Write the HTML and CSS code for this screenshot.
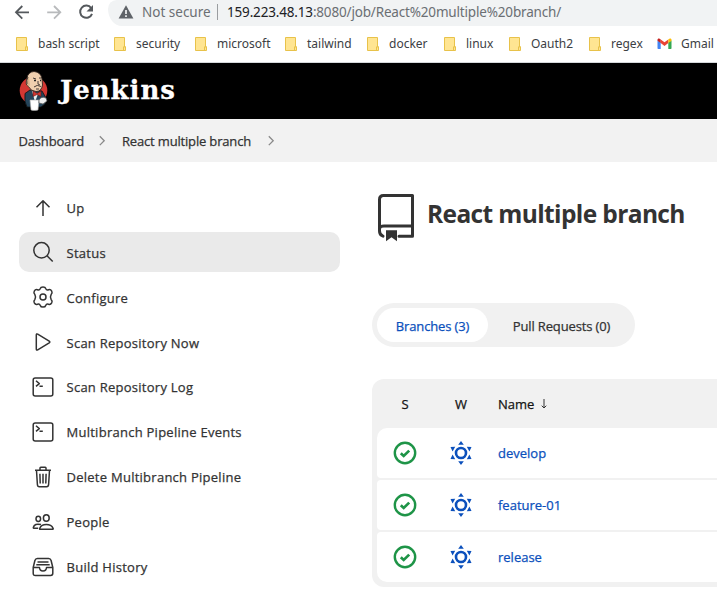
FILE: index.html
```html
<!DOCTYPE html>
<html lang="en">
<head>
<meta charset="utf-8">
<title>React multiple branch [Jenkins]</title>
<link rel="stylesheet" href="styles.css">
</head>
<body>
<svg class="defs" aria-hidden="true">
  <symbol id="folder" viewBox="0 0 14 16"><path d="M1.500 1.500h10v9.300h1v3.700h-11z" fill="#ffe592" stroke="#e8c24a"/><path d="M10.500 14v-3.200h2" fill="none" stroke="#e8c24a"/></symbol>
  <symbol id="chevron" viewBox="0 0 8 12"><path d="M1.800 1.300l4.400 4.400-4.400 4.400" fill="none" stroke="#8a8a8a" stroke-width="1.300"/></symbol>
  <symbol id="terminal" viewBox="0 0 24 24"><rect x="2.200" y="3" width="19.600" height="18" rx="2"/><path d="M5 5.800l3.300 2.800L5 11.400M8.500 11.200h3.300"/></symbol>
  <symbol id="ok" viewBox="0 0 24 24"><circle cx="12" cy="12" r="10.200" fill="none" stroke="#1e9447" stroke-width="2.400"/><path d="M7.800 12.300l2.900 2.700 5.500-5.400" fill="none" stroke="#1e9447" stroke-width="2.700"/></symbol>
  <symbol id="sun" viewBox="0 0 24 24"><circle cx="12" cy="12" r="5" fill="none" stroke="#0b50bc" stroke-width="2.600"/><path fill="#0b50bc" d="M12 .1l2.800 3.700H9.200zM12 23.900l2.800-3.700H9.200zM1.500 6.100l4.700-.3-2.600 4.700zM22.500 6.100l-4.700-.3 2.600 4.700zM1.500 17.900l4.700.3-2.600-4.700zM22.500 17.900l-4.700.3 2.600-4.700z"/></symbol>
</svg>

<div class="toolbar">
  <svg class="nav-icons" width="108" height="26" viewBox="0 0 108 26" fill="none" stroke-width="1.800">
    <path stroke="#55595d" d="M29 12.300H16.300M22.300 6l-6.300 6.300 6.300 6.300"/>
    <path stroke="#b8babc" d="M47.200 12.300H60M54 6l6.300 6.300-6.300 6.300"/>
    <path stroke="#55595d" stroke-width="2" d="M91.200 8.100A6.100 6.100 0 1 0 92 13.800"/><path fill="#55595d" d="M93 5v6.500h-6.500z"/>
  </svg>
  <div class="omnibox">
    <svg width="16" height="14" viewBox="0 0 16 14"><path fill="#5f6368" d="M8 .3L15.400 13.500H.6z"/><path stroke="#f1f3f4" stroke-width="1.700" d="M8 5v4M8 10.200V12"/></svg>
    <span class="insecure">Not secure</span>
    <span class="url"><b>159.223.48.13</b>:8080/job/React%20multiple%20branch/</span>
  </div>
</div>

<nav class="bookmarks">
  <a><svg><use href="#folder"/></svg>bash script</a>
  <a><svg><use href="#folder"/></svg>security</a>
  <a><svg><use href="#folder"/></svg>microsoft</a>
  <a><svg><use href="#folder"/></svg>tailwind</a>
  <a><svg><use href="#folder"/></svg>docker</a>
  <a><svg><use href="#folder"/></svg>linux</a>
  <a><svg><use href="#folder"/></svg>Oauth2</a>
  <a><svg><use href="#folder"/></svg>regex</a>
  <a class="mail"><svg viewBox="0 0 15 12"><path fill="#4285f4" d="M.5 2.500l3.200 2V11H1.300Q.5 11 .5 10.200z"/><path fill="#34a853" d="M14.500 2.500l-3.200 2V11h2.400q.8 0 .8-.8z"/><path fill="#ea4335" d="M3.700 1.400l3.800 2.900 3.800-2.900v3.700L7.500 8 3.700 5.100z"/><path fill="#c5221f" d="M.5 2C.5.3 2.200 0 3.700 1.400v3.700L.5 2.800z"/><path fill="#fbbc04" d="M14.500 2c0-1.700-1.700-2-3.200-.6v3.700l3.200-2.300z"/></svg>Gmail</a>
</nav>

<header class="brand">
  <svg width="30" height="42" viewBox="0 0 30 42">
    <circle cx="14.500" cy="20.500" r="13.800" fill="#d33833"/>
    <path d="M6 23.500L11 20l12 1 4 7-1 6-4 3H8q-3-5-2-13.500z" fill="#24445a" stroke="#111" stroke-width=".8"/>
    <path d="M13 21l6 3-3 8z" fill="#e8eff0"/>
    <path d="M8 8Q9 2 15 1.500q7 .5 8 7.500l.5 6q-1 6.500-6.500 6.500-5 0-8-5.500-3-1-1-8z" fill="#efcfae" stroke="#30251f" stroke-width=".9"/>
    <path d="M8 9q-1.500 5 1.500 7.500 2 0 1-5L10 7z" fill="#d8b58d"/>
    <path d="M9 7q-2 3-1 7M14 8l3 1M20 8h2M19 11v3l2 1M15 17q3-3 7-.5M17 19h3" fill="none" stroke="#453b36"/>
    <path d="M15 10.500h2M21 10.500h1" stroke="#222" stroke-width="1.300"/>
    <path d="M14 21l4 2.500 4-2.500v5.500l-4-2-4 2z" fill="#d33833" stroke="#5c1514" stroke-width=".6"/>
    <path d="M11 30h9l-1 10q-4 1-7 0z" fill="#fff" stroke="#aaa" stroke-width=".6"/>
    <path d="M20 30q2-4 7-2l1 3-4 3-4-1z" fill="#eee" stroke="#555" stroke-width=".7"/>
  </svg>
  <span class="wordmark">Jenkins</span>
</header>

<nav class="crumbs">
  <a class="c1">Dashboard</a><svg><use href="#chevron"/></svg>
  <a class="c2">React multiple branch</a><svg><use href="#chevron"/></svg>
</nav>

<div class="page">
  <aside class="tasks">
    <a><svg viewBox="0 0 24 24"><path d="M12 20V4.700M5.500 11.200L12 4.700l6.500 6.500"/></svg><span>Up</span></a>
    <a class="active"><svg viewBox="0 0 24 24"><circle cx="10.500" cy="10.300" r="7.700"/><path d="M16.200 16l5.500 5.500"/></svg><span>Status</span></a>
    <a><svg viewBox="0 0 24 24"><circle cx="12" cy="12" r="3"/><path d="M9.300 3.500Q9.700 1.900 12 1.900t2.700 1.600q.8 2 2.900 1.200 2-.6 3.100 1.400 1 2-.5 3.300-1.500 2.600 0 5.200 1.500 1.300.5 3.300-1.100 2-3.100 1.400-2.100-.8-2.900 1.200-.4 1.600-2.700 1.600t-2.700-1.600q-.8-2-2.900-1.200-2 .6-3.100-1.400-1-2 .5-3.300 1.500-2.600 0-5.200-1.500-1.300-.5-3.300 1.100-2 3.100-1.400 2.100.8 2.900-1.200z"/></svg><span>Configure</span></a>
    <a><svg viewBox="0 0 24 24"><path d="M5.300 5v14q0 1.600 1.400.9l11.500-7q1.300-.9 0-1.800L6.700 4.100Q5.300 3.400 5.300 5z"/></svg><span>Scan Repository Now</span></a>
    <a><svg><use href="#terminal"/></svg><span>Scan Repository Log</span></a>
    <a><svg><use href="#terminal"/></svg><span>Multibranch Pipeline Events</span></a>
    <a><svg viewBox="0 0 24 24"><path d="M4 5.300h16M9 5V3q0-.8.800-.8h4.400q.8 0 .8.800v2M5.500 5.500l.9 14q.1 2.200 2 2.200h7.200q1.900 0 2-2.200l.9-14M8.900 8.700l.3 9.800M12 8.700v9.800M15.100 8.700l-.3 9.800"/></svg><span>Delete Multibranch Pipeline</span></a>
    <a><svg viewBox="0 0 24 24"><ellipse cx="15.300" cy="8" rx="2.900" ry="3.300"/><path d="M9 19.300q-.5 0-.2-1 1.500-3.700 6.500-3.700t6.800 3.700q.3 1-.3 1z"/><ellipse cx="7.300" cy="8.800" rx="2.300" ry="2.600"/><path d="M10 14.600q-6.500-1.700-7.700 2.900 0 .8.600.8h4.300"/></svg><span>People</span></a>
    <a><svg viewBox="0 0 24 24"><path d="M2.200 12.500l1.700-7q.6-2 2.500-2h11.200q1.900 0 2.500 2l1.700 7v5.800q0 2.200-2.200 2.200H4.400q-2.200 0-2.200-2.200zM2.200 12.500h6.300q.2 3.500 3.500 3.500t3.500-3.500h6.300M6.500 7h11M5.300 9.800h13.400"/></svg><span>Build History</span></a>
  </aside>

  <main>
    <div class="heading">
      <svg width="38" height="50" viewBox="0 0 38 50" fill="none" stroke="#333" stroke-width="3">
        <path d="M6 44.200Q2.500 43 2.500 39V7.500Q2.500 3.500 6.500 3.500H35.500v40.700H22" stroke-linecap="round" stroke-linejoin="round"/>
        <path d="M2.500 36.500Q3 34 7 34h28"/>
        <path d="M9 38.200h11v11l-5.500-4L9 49.200z" fill="#333" stroke="none"/>
      </svg>
      <h1>React multiple branch</h1>
    </div>

    <div class="tabs">
      <a class="tab selected">Branches (3)</a>
      <a class="tab">Pull Requests (0)</a>
    </div>

    <div class="table">
      <div class="row head"><span>S</span><span>W</span><span class="name">Name <svg width="8" height="12" viewBox="0 0 8 12"><path d="M4 1v9M1.700 7.700L4 10l2.300-2.300" fill="none" stroke="#333"/></svg></span></div>
      <div class="row"><svg><use href="#ok"/></svg><svg><use href="#sun"/></svg><a class="name">develop</a></div>
      <div class="row"><svg><use href="#ok"/></svg><svg><use href="#sun"/></svg><a class="name">feature-01</a></div>
      <div class="row"><svg><use href="#ok"/></svg><svg><use href="#sun"/></svg><a class="name">release</a></div>
    </div>
  </main>
</div>
</body>
</html>
```

FILE: styles.css
```css
* { box-sizing: border-box; }
body {
  margin: 0;
  height: 599px;
  overflow: hidden;
  background: #fff;
  color: #333;
  font-family: "Open Sans", "Noto Sans", sans-serif;
  font-size: 13px;
  font-weight: 500;
}
svg { display: block; flex: none; }
.defs { display: none; }

.toolbar { display: flex; height: 26px; }
.omnibox {
  flex: 1;
  display: flex;
  align-items: center;
  padding: 0 0 2px 10px;
  background: #f1f3f4;
  border-radius: 10px 0 0 16px / 10px 0 0 20px;
  font: 400 13.5px/24px "Noto Sans", sans-serif;
  white-space: nowrap;
}
.insecure { position: relative; width: 77px; margin-left: 8px; color: #6b6f73; }
.insecure::after { content: ""; position: absolute; right: 1px; top: 4px; height: 16px; width: 1px; background: #9a9da0; }
.url { margin-left: 8px; color: #6b6f73; letter-spacing: -0.17px; }
.url b { font-weight: 400; color: #202124; }

.bookmarks {
  display: grid;
  grid-template-columns: 98px 81px 90px 82px 77px 65px 80px 69px 60px;
  height: 37px;
  padding-left: 15px;
  align-items: center;
  border-bottom: 1px solid #d5d8db;
  color: #3c4043;
  font: 400 12px/18px "Noto Sans", sans-serif;
}
.bookmarks a { display: flex; align-items: center; gap: 9px; white-space: nowrap; }
.bookmarks svg { width: 14px; height: 16px; }
.bookmarks .mail svg { width: 15px; height: 12px; }

.brand { display: flex; align-items: center; gap: 11px; height: 56px; padding: 0 0 1px 19px; background: #000; }
.wordmark { color: #fff; font: bold 26px/32px "DejaVu Serif", serif; letter-spacing: 0.95px; margin-top: -2px; -webkit-text-stroke: 0.3px #fff; }

.crumbs, .tasks, .tabs, .table { -webkit-text-stroke: 0.25px currentColor; }
.crumbs { display: flex; align-items: center; height: 43px; padding-left: 18.5px; background: #f2f2f2; color: #333; white-space: nowrap; letter-spacing: -0.17px; }
.crumbs svg { width: 8px; height: 12px; }
.c1 { width: 79.5px; }
.c2 { margin-left: 16px; width: 145px; }

.page { display: flex; padding: 26px 0 0 19px; }
.tasks { display: flex; flex-direction: column; gap: 4.875px; width: 321px; flex: none; margin-top: -0.4px; letter-spacing: 0.26px; }
.tasks a { display: flex; align-items: center; gap: 11.5px; height: 40px; padding-left: 12px; border-radius: 10px; white-space: nowrap; }
.tasks .active { background: #eaeaea; }
.tasks svg { width: 24px; height: 24px; fill: none; stroke: #333; stroke-width: 1.5; stroke-linejoin: round; }
.tasks span { padding-top: 0.6px; }

main { flex: 1; margin-left: 32px; min-width: 0; }
.heading { display: flex; align-items: flex-start; height: 115px; padding: 4px 0 0 5px; gap: 12px; }
h1 { margin: 5px 0 0; font-size: 24.5px; line-height: 34px; font-weight: 700; letter-spacing: -0.62px; white-space: nowrap; }

.tabs { display: flex; width: 263px; height: 44px; padding: 5px; background: #f1f1f1; border-radius: 22px; white-space: nowrap; letter-spacing: -0.14px; }
.tab { display: flex; align-items: center; justify-content: center; flex: 1; padding: 2px 0 0 5px; }
.tab.selected { flex: none; width: 111px; padding-left: 0; background: #fff; border-radius: 17px; color: #0b50bc; }

.table { display: grid; gap: 2px; margin-top: 32px; padding: 0 0 5px 5px; background: #f1f1f1; border-radius: 12px 0 0 12px; }
.row { display: grid; grid-template-columns: 56px 56px 1fr; align-items: center; justify-items: center; height: 50px; background: #fff; border-radius: 4px 0 0 4px; }
.row:nth-child(2) { border-top-left-radius: 10px; }
.row:last-child { border-bottom-left-radius: 10px; }
.row.head { height: 47px; padding-top: 2px; background: none; color: #141414; }
.row svg { width: 24px; height: 24px; }
.row .name { justify-self: start; margin-left: 9px; }
.row a { color: #0b50bc; }
.head .name { display: flex; align-items: center; gap: 6px; }
.head .name svg { width: 8px; height: 12px; }
```
